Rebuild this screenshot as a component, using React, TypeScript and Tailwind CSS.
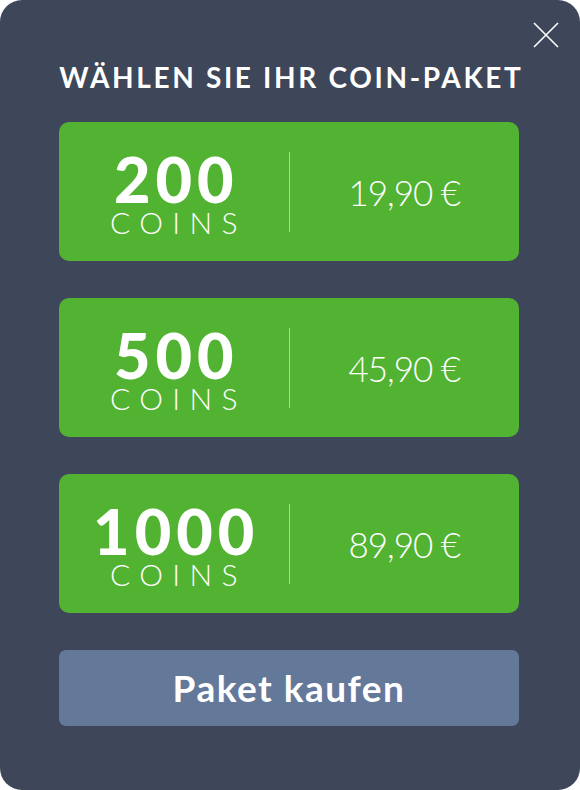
import React from "react";

const packs = [
  { n: "200", p: "19,90 €" },
  { n: "500", p: "45,90 €" },
  { n: "1000", p: "89,90 €" },
];

export default function App() {
  return (
    <div className="w-[580px] h-[790px] bg-white" style={{ fontFamily: "Lato, 'Open Sans', sans-serif" }}>
      <div className="relative w-full h-full bg-[#3e4659] rounded-[22px] flex flex-col items-center">
        <button className="absolute right-[21px] top-[22px] w-[26px] h-[26px]">
          <svg viewBox="0 0 26 26" width="26" height="26">
            <path d="M1 1 L25 25 M25 1 L1 25" stroke="#ffffff" strokeWidth="1.6" />
          </svg>
        </button>
        <h1 className="mt-[60px] text-center text-white font-bold text-[28px] leading-[34px] tracking-[0.095em] pl-[0.095em] uppercase whitespace-nowrap">
          Wählen Sie Ihr Coin-Paket
        </h1>
        <div className="mt-[28px] w-[460px] mr-[2px] flex flex-col gap-[37px]">
          {packs.map((pk) => (
            <div key={pk.n} className="h-[139px] bg-[#52b332] rounded-[10px] flex items-center">
              <div className="flex-1 flex flex-col items-center pt-[2px]">
                <div className="text-white font-black text-[63px] leading-[58px] tracking-[0.08em] pl-[0.08em]">{pk.n}</div>
                <div className="text-white font-light text-[30px] leading-[28px] tracking-[0.31em] pl-[0.31em]">COINS</div>
              </div>
              <div className="w-px h-[80px] bg-white/50" />
              <div className="flex-1 flex justify-center">
                <span className="text-white font-light text-[35px] leading-[40px] tracking-[-0.03em]">{pk.p}</span>
              </div>
            </div>
          ))}
        </div>
        <button className="mt-[37px] w-[460px] mr-[2px] h-[76px] bg-[#647899] rounded-[7px] text-white font-bold text-[37px] tracking-[0.04em]">
          Paket kaufen
        </button>
      </div>
    </div>
  );
}
